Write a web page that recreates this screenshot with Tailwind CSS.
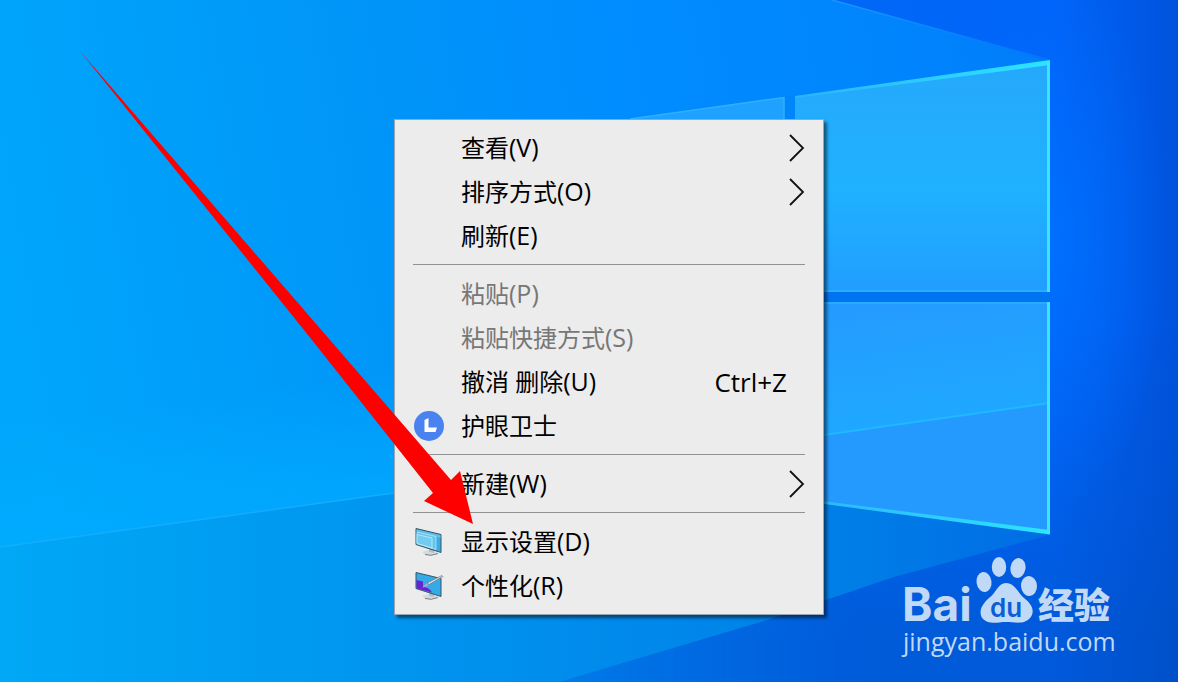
<!DOCTYPE html>
<html lang="zh-CN">
<head>
<meta charset="utf-8">
<meta name="viewport" content="width=device-width, initial-scale=1">
<title>桌面右键菜单</title>
<script src="https://cdn.jsdelivr.net/npm/@tailwindcss/browser@4"></script>
</head>
<body class="font-['Open_Sans','Noto_Sans_CJK_SC',sans-serif]">
<main class="relative min-h-screen overflow-hidden bg-[#0090f8]">
  <!-- Wallpaper -->
  <svg class="absolute inset-0 h-full w-full" viewBox="0 0 1178 682" preserveAspectRatio="xMinYMin slice" aria-hidden="true">
    <defs>
      <linearGradient id="base" gradientUnits="userSpaceOnUse" x1="0" y1="200" x2="1178" y2="0">
        <stop offset="0" stop-color="#00a6fb"/><stop offset=".34" stop-color="#0094f8"/><stop offset=".55" stop-color="#008cff"/><stop offset=".78" stop-color="#0084fd"/><stop offset="1" stop-color="#0074f6"/>
      </linearGradient>
      <linearGradient id="night" gradientUnits="userSpaceOnUse" x1="560" y1="0" x2="1178" y2="0">
        <stop offset="0" stop-color="#0080ee"/><stop offset=".45" stop-color="#0068f6"/><stop offset=".8" stop-color="#0064fa"/><stop offset="1" stop-color="#0053dc"/>
      </linearGradient>
      <linearGradient id="dusk" gradientUnits="userSpaceOnUse" x1="0" y1="330" x2="0" y2="640">
        <stop offset="0" stop-color="#0050b4" stop-opacity="0"/><stop offset="1" stop-color="#004cb0" stop-opacity=".42"/>
      </linearGradient>
      <linearGradient id="duskFade" gradientUnits="userSpaceOnUse" x1="560" y1="0" x2="860" y2="0">
        <stop offset="0" stop-color="#fff" stop-opacity=".2"/><stop offset="1" stop-color="#fff"/>
      </linearGradient>
      <mask id="duskMask" maskUnits="userSpaceOnUse" x="0" y="0" width="1178" height="682"><rect width="1178" height="682" fill="url(#duskFade)"/></mask>
      <linearGradient id="low" gradientUnits="userSpaceOnUse" x1="0" y1="0" x2="1100" y2="0">
        <stop offset="0" stop-color="#00a8f6"/><stop offset=".36" stop-color="#0095ef"/><stop offset=".75" stop-color="#0080e8"/><stop offset="1" stop-color="#0068e4"/>
      </linearGradient>
      <linearGradient id="beam" gradientUnits="userSpaceOnUse" x1="180" y1="400" x2="197" y2="520">
        <stop offset="0" stop-color="#00b0ff" stop-opacity="0"/><stop offset="1" stop-color="#00acff" stop-opacity=".7"/>
      </linearGradient>
      <linearGradient id="pane1" x1="0" y1="0" x2="0" y2="1">
        <stop offset="0" stop-color="#26a8fb"/><stop offset=".55" stop-color="#1fb2ff"/><stop offset="1" stop-color="#219dff"/>
      </linearGradient>
      <linearGradient id="pane2" gradientUnits="userSpaceOnUse" x1="930" y1="303" x2="945" y2="420">
        <stop offset="0" stop-color="#249cff"/><stop offset="1" stop-color="#1fa8ff"/>
      </linearGradient>
      <linearGradient id="edgeH" gradientUnits="userSpaceOnUse" x1="790" y1="0" x2="1050" y2="0">
        <stop offset="0" stop-color="#2cb2ff"/><stop offset="1" stop-color="#2ce4ff"/>
      </linearGradient>
      <radialGradient id="glow" gradientUnits="userSpaceOnUse" cx="1049" cy="240" r="120" gradientTransform="translate(0 -312) scale(1 2.3)">
        <stop offset="0" stop-color="#0074ff" stop-opacity=".75"/><stop offset="1" stop-color="#0070ff" stop-opacity="0"/>
      </radialGradient>
      <linearGradient id="ray" gradientUnits="userSpaceOnUse" x1="832" y1="0" x2="1049" y2="60">
        <stop offset="0" stop-color="#1a94ff"/><stop offset="1" stop-color="#0078ff"/>
      </linearGradient>
    </defs>
    <rect width="1178" height="682" fill="url(#base)"/>
    <path d="M0 350 L400 350 V493 L0 547Z" fill="url(#beam)"/>
    <path d="M0 547 L394 493 L824 435 L1060 403 V682 H0Z" fill="url(#low)"/>
    <path d="M0 547 L394 493" stroke="#13adff" stroke-width="1.5"/>
    <path d="M832 0 L1049 61 V535 L894 577 L767 620 L559 682 H1178 V0Z" fill="url(#night)"/>
    <path d="M832 0 L1049 61 V535 L894 577 L767 620 L559 682 H1178 V0Z" fill="url(#dusk)" mask="url(#duskMask)"/>
    <path d="M832 0 L1049 61 V535 H1178 V0Z" fill="url(#glow)"/>
    <path d="M832 0 L1049 60" stroke="url(#ray)" stroke-width="1.5"/>
    <path d="M824 290 H1049 V304 H824Z" fill="#0073f0"/>
    <path d="M784 97 L795 95 V122 H784Z" fill="#0085fb"/>
    <path d="M630 119 L784 97 V125 H630Z" fill="#1fa2ff"/>
    <path d="M630 119 L784 97.500 V120" fill="none" stroke="#2fb0ff" stroke-width="1.500"/>
    <path d="M795 97 L1050 61 V292 H795Z" fill="url(#pane1)"/>
    <path d="M795 303 H1050 V534 L795 499Z" fill="#249aff"/>
    <path d="M795 303 H1050 V403 L795 439Z" fill="url(#pane2)"/>
    <path d="M795 439 L1049 403" stroke="#20b8ff" stroke-width="2"/>
    <path d="M795 96 L1050 60 V65 L795 98Z M795 497.500 L1050 530 V534.500 L795 500Z" fill="url(#edgeH)"/>
    <path d="M795 291 H1049 M795 303 H1049" stroke="#27adff" stroke-width="2"/>
    <path d="M1048.500 61 V292 M1048.500 302 V534" stroke="#3be4ff" stroke-width="3"/>
  </svg>

  <!-- Context menu -->
  <nav aria-label="桌面菜单" class="relative ml-[394px] mt-[119px] w-[430px] border border-[#9aa7b3] bg-[#ececec] py-[6px] text-2xl text-black shadow-[3px_3px_3px_rgba(0,0,0,0.5)]">
    <button type="button" class="flex h-11 w-full items-center pr-[18px] text-left"><span class="w-[66px]"></span><span class="flex-1">查看<span class="text-[25px]">(V)</span></span><svg class="h-7 w-4" viewBox="0 0 16 28" fill="none" stroke="#111" stroke-width="1.800"><path d="M1 1 L14 14 L1 27"/></svg></button>
    <button type="button" class="flex h-11 w-full items-center pr-[18px] text-left"><span class="w-[66px]"></span><span class="flex-1">排序方式<span class="text-[25px]">(O)</span></span><svg class="h-7 w-4" viewBox="0 0 16 28" fill="none" stroke="#111" stroke-width="1.800"><path d="M1 1 L14 14 L1 27"/></svg></button>
    <button type="button" class="flex h-11 w-full items-center pr-[18px] text-left"><span class="w-[66px]"></span><span class="flex-1">刷新<span class="text-[25px]">(E)</span></span></button>
    <hr class="mx-[18px] mt-[6px] mb-[7px] border-t border-[#919191]">
    <button type="button" disabled class="flex h-11 w-full items-center pr-[18px] text-left text-[#777]"><span class="w-[66px]"></span><span class="flex-1">粘贴<span class="text-[25px]">(P)</span></span></button>
    <button type="button" disabled class="flex h-11 w-full items-center pr-[18px] text-left text-[#777]"><span class="w-[66px]"></span><span class="flex-1">粘贴快捷方式<span class="text-[25px]">(S)</span></span></button>
    <button type="button" class="flex h-11 w-full items-center pr-9 text-left"><span class="w-[66px]"></span><span class="flex-1">撤消 删除<span class="text-[25px]">(U)</span></span><span class="text-[26px]">Ctrl+Z</span></button>
    <button type="button" class="flex h-11 w-full items-center pr-[18px] text-left"><span class="flex w-[66px] pl-[18px]"><svg class="size-8" viewBox="0 0 32 32"><circle cx="16" cy="16" r="15" fill="#4a82f0"/><path d="M11.500 10 L15.500 8 V17.500 H24 L22.500 22 H11.500Z" fill="#fff"/></svg></span><span class="flex-1">护眼卫士</span></button>
    <hr class="mx-[18px] mt-[6px] mb-[7px] border-t border-[#919191]">
    <button type="button" class="flex h-11 w-full items-center pr-[18px] text-left"><span class="w-[66px]"></span><span class="flex-1">新建<span class="text-[25px]">(W)</span></span><svg class="h-7 w-4" viewBox="0 0 16 28" fill="none" stroke="#111" stroke-width="1.800"><path d="M1 1 L14 14 L1 27"/></svg></button>
    <hr class="mx-[18px] mt-[6px] mb-[7px] border-t border-[#919191]">
    <button type="button" class="flex h-11 w-full items-center pr-[18px] text-left"><span class="flex w-[66px] pl-[18px]"><svg class="size-8" viewBox="0 0 32 32"><path d="M9 26 L15 24 L23 25.500 L25 27.500 L18 29.500 L12 28.500Z" fill="#d5dade"/><path d="M12 28.500 Q18 30.500 25 27.500" stroke="#777f86" fill="none"/><path d="M16 21 h5 v6 l-5-1Z" fill="#b7bec4"/><path d="M3 2.500 L28 8.500 V26.500 L3 18.500Z" fill="#3cabdf" stroke="#3d5360"/><path d="M3.500 3.500 L27.500 9.300 V12 L3.500 6Z" fill="#62bfe6"/><path d="M4 6 L23 10.500 V23.500 L4 17.500Z" fill="#66c4ec" stroke="#b5e8fb" stroke-width=".8"/><path d="M4 8.500 L19 12 V22 L4 17.500Z" fill="#74cbf0" stroke="#c3edfc" stroke-width=".8"/></svg></span><span class="flex-1">显示设置<span class="text-[25px]">(D)</span></span></button>
    <button type="button" class="flex h-11 w-full items-center pr-[18px] text-left"><span class="flex w-[66px] pl-[18px]"><svg class="size-8" viewBox="0 0 32 32"><path d="M9 26 L15 24 L23 25.500 L25 27.500 L18 29.500 L12 28.500Z" fill="#d5dade"/><path d="M12 28.500 Q18 30.500 25 27.500" stroke="#777f86" fill="none"/><path d="M16 21 h5 v6 l-5-1Z" fill="#b7bec4"/><path d="M3 2.500 L28 8.500 V26.500 L3 18.500Z" fill="#35aae8" stroke="#3d5360"/><path d="M3.500 10 L10 11.500 V17 Q16 17 19 22.500 L3.500 18.300Z" fill="#6a22d0"/><path d="M9 17.500 L14 13 L16 14 Q15 17 9 17.500Z" fill="#a9a5dc"/><path d="M14 13 L29 5.500 L30 6.500 L16 14.500Z" fill="#dfe5ea" stroke="#66717c" stroke-width=".7"/></svg></span><span class="flex-1">个性化<span class="text-[25px]">(R)</span></span></button>
  </nav>

  <!-- Arrow pointing at the display settings entry -->
  <svg class="pointer-events-none absolute inset-0 h-full w-full" viewBox="0 0 1178 682" preserveAspectRatio="xMinYMin slice" aria-hidden="true">
    <path d="M80 51 L330 340 L451 480 L460 471 L473 524 L424 501 L433 493 L312 340Z" fill="#f00"/>
  </svg>

  <!-- Site mark -->
  <footer class="absolute right-[64px] bottom-[25px] w-[211px] text-[#c0d9f6]">
    <svg class="block h-[67px] w-full overflow-visible" viewBox="0 0 211 67" fill="currentColor" role="img" aria-label="Baidu 经验">
      <ellipse cx="81" cy="24" rx="7.500" ry="10" transform="rotate(-8 81 24)"/><ellipse cx="96" cy="9" rx="7.200" ry="10"/><ellipse cx="115" cy="10" rx="7.500" ry="10" transform="rotate(10 115 10)"/><ellipse cx="126" cy="28" rx="8" ry="10" transform="rotate(-4 126 28)"/>
      <path d="M103 25 C112 25 114 34 121 40 C130 47 132 54 127 60 C121 67 112 64 103 64 C94 64 86 67 80 61 C75 55 78 47 86 40 C94 34 95 25 103 25Z"/>
      <text x="-1" y="63" font-family="Inter, sans-serif" font-weight="700" font-size="46">Bai</text>
      <text x="87" y="59" font-family="Inter, sans-serif" font-weight="600" font-size="26" fill="#0a5fd6">du</text>
      <text x="135" y="61" font-family="Noto Sans CJK SC, sans-serif" font-weight="900" font-size="36">经验</text>
    </svg>
    <a href="#" class="block text-[25px] leading-8">jingyan.baidu.com</a>
  </footer>
</main>
</body>
</html>
